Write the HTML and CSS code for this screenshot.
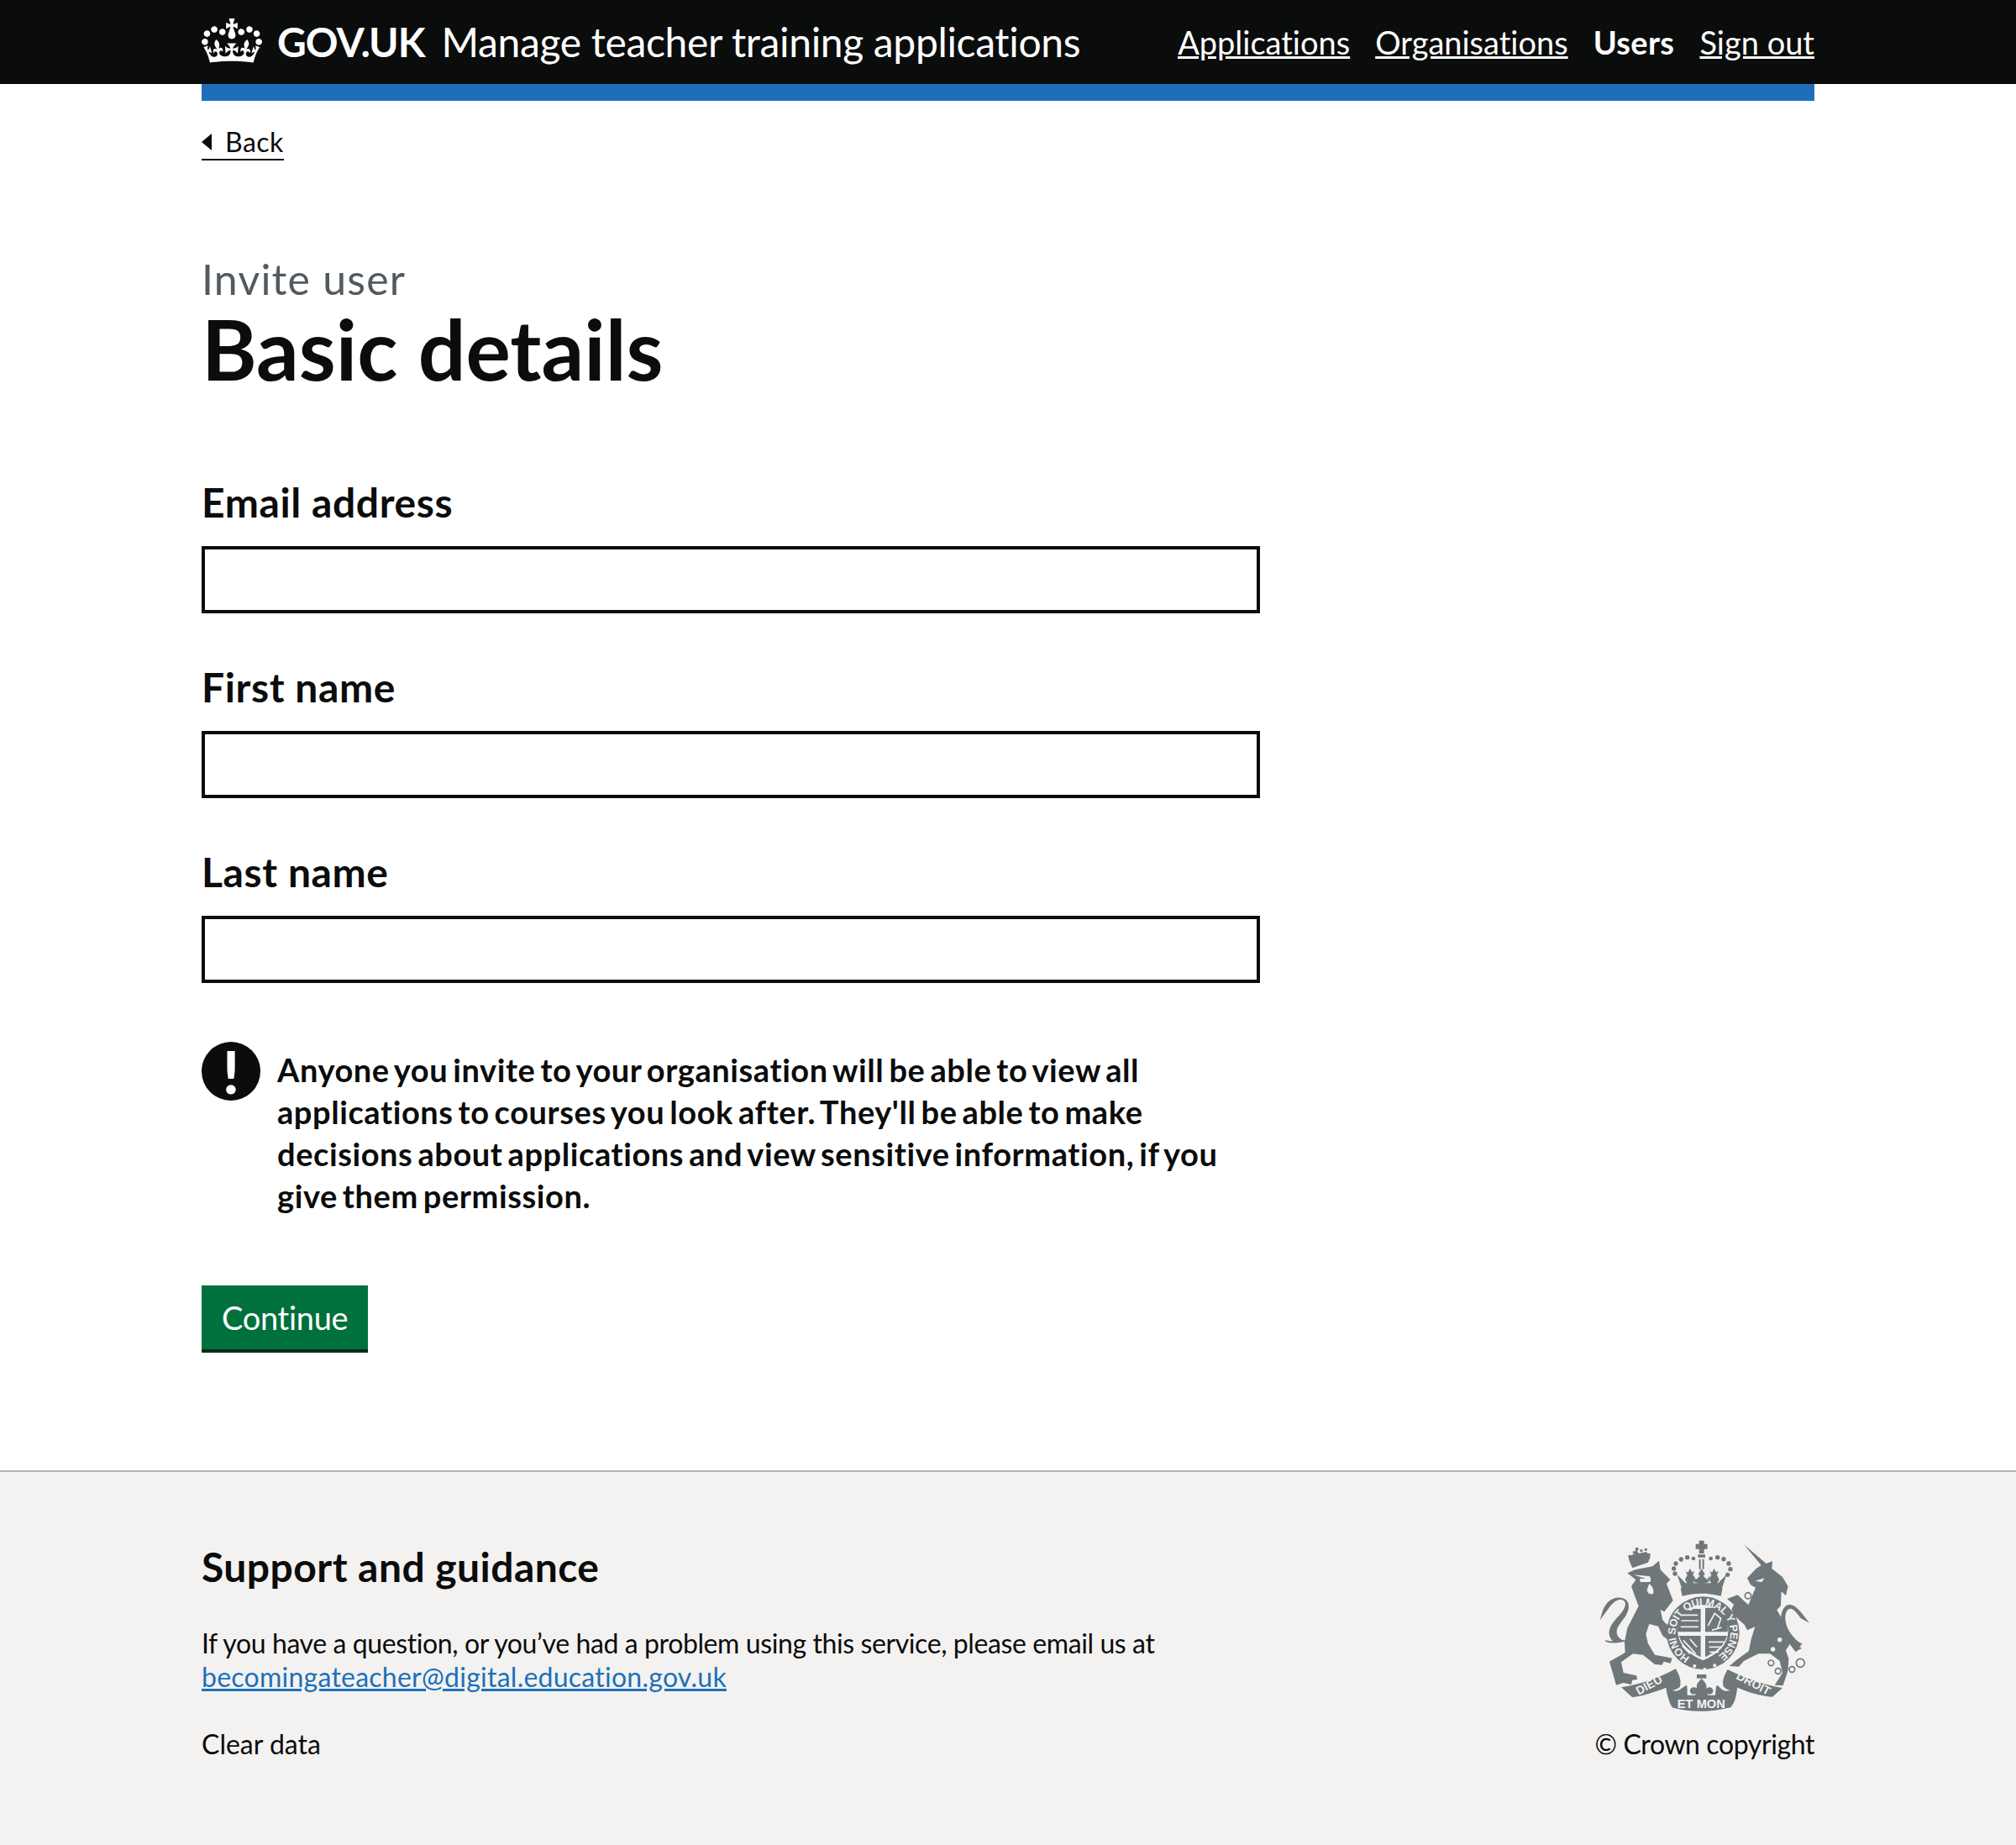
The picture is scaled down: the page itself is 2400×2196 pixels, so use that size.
FILE: index.html
```html
<!DOCTYPE html>
<html lang="en">
<head>
<meta charset="utf-8">
<title>Basic details - Manage teacher training applications</title>
<link rel="stylesheet" href="styles.css">
</head>
<body>
<header class="header">
  <div class="container header-inner">
    <a class="logo" href="#">
      <svg class="crown" viewBox="0 0 132 97" aria-hidden="true"><path fill="currentColor" fill-rule="evenodd" d="M25 30.2c3.5 1.5 7.7-.2 9.1-3.7 1.5-3.6-.2-7.8-3.9-9.2-3.6-1.4-7.6.3-9.1 3.9-1.4 3.5.3 7.5 3.9 9zM9 39.5c3.6 1.5 7.8-.2 9.2-3.7 1.5-3.6-.2-7.8-3.9-9.1-3.6-1.5-7.6.2-9.1 3.8-1.4 3.5.3 7.5 3.8 9zM4.4 57.2c3.5 1.5 7.7-.2 9.1-3.8 1.5-3.6-.2-7.7-3.9-9.1-3.5-1.5-7.6.3-9.1 3.8-1.4 3.5.3 7.6 3.9 9.1zm38.3-21.4c3.5 1.5 7.7-.2 9.1-3.8 1.5-3.6-.2-7.7-3.9-9.1-3.6-1.5-7.6.3-9.1 3.8-1.3 3.6.4 7.7 3.9 9.1zm64.4-5.6c-3.6 1.5-7.8-.2-9.1-3.7-1.5-3.6.2-7.8 3.8-9.2 3.6-1.4 7.7.3 9.2 3.9 1.3 3.5-.4 7.5-3.9 9zm15.9 9.3c-3.6 1.5-7.7-.2-9.1-3.7-1.5-3.6.2-7.8 3.7-9.1 3.6-1.5 7.7.2 9.2 3.8 1.5 3.5-.3 7.5-3.8 9zm4.7 17.7c-3.6 1.5-7.8-.2-9.2-3.8-1.5-3.6.2-7.7 3.9-9.1 3.6-1.5 7.7.3 9.2 3.8 1.3 3.5-.4 7.6-3.9 9.1zM89.3 35.8c-3.6 1.5-7.8-.2-9.2-3.8-1.4-3.6.2-7.7 3.9-9.1 3.6-1.5 7.7.3 9.2 3.8 1.4 3.6-.3 7.7-3.9 9.1zM69.7 17.7l8.9 4.7V9.3l-8.9 2.8c-.2-.3-.5-.6-.9-.9L72.4 0H59.6l3.5 11.2c-.3.3-.6.5-.9.9l-8.8-2.8v13.1l8.8-4.7c.3.3.6.7.9.9l-5 15.4v.1c-.2.8-.4 1.6-.4 2.4 0 4.1 3.1 7.5 7 8.1h.2c.3 0 .7.1 1 .1.4 0 .7 0 1-.1h.2c4-.6 7.1-4.1 7.1-8.1 0-.8-.1-1.7-.4-2.4V34l-5.1-15.4c.4-.2.7-.6 1-.9zM66 92.8c16.9 0 32.8 1.1 47.1 3.2 4-16.9 8.9-26.7 14-33.5l-9.6-3.4c1 4.9 1.1 7.2 0 10.2-1.5-1.4-3-4.3-4.2-8.7L108.6 76c2.8-2 5-3.2 7.5-3.3-4.4 9.4-10 11.9-13.6 11.2-4.3-.8-6.3-4.6-5.6-7.9 1-4.7 5.7-5.9 8-.5 4.3-8.7-3-11.4-7.6-8.8 7.1-7.2 7.9-13.5 2.1-21.1-8 6.1-8.1 12.3-4.5 20.8-4.7-5.4-12.1-2.5-9.5 6.2 3.4-5.2 7.9-2 7.2 3.1-.6 4.3-6.4 7.8-13.5 7.2-10.3-.9-10.9-8-11.2-13.8 2.5-.5 7.1 1.8 11 7.3L80.2 60c-4.1 4.4-8 5.3-12.3 5.4 1.4-4.4 8-11.6 8-11.6H55.5s6.4 7.2 7.9 11.6c-4.2-.1-8-1-12.3-5.4l1.4 16.4c3.9-5.5 8.5-7.7 10.9-7.3-.3 5.8-.9 12.8-11.1 13.8-7.2.6-12.9-2.9-13.5-7.2-.7-5 3.8-8.3 7.1-3.1 2.7-8.7-4.6-11.6-9.4-6.2 3.7-8.5 3.6-14.7-4.6-20.8-5.8 7.6-5 13.9 2.2 21.1-4.7-2.6-11.9.1-7.7 8.8 2.3-5.5 7.1-4.2 8.1.5.7 3.3-1.3 7.1-5.7 7.9-3.5.7-9-1.8-13.5-11.2 2.5.1 4.7 1.3 7.5 3.3l-4.7-15.4c-1.2 4.4-2.7 7.2-4.3 8.7-1.1-3-.9-5.3 0-10.2l-9.5 3.4c5 6.9 9.9 16.7 14 33.5 14.8-2.1 30.8-3.2 47.7-3.2z"/></svg>
      <span class="logotype">GOV.UK</span>
    </a>
    <a class="service" href="#">Manage teacher training applications</a>
    <nav class="nav">
      <a href="#">Applications</a>
      <a href="#">Organisations</a>
      <a class="nav-current" href="#">Users</a>
      <a href="#">Sign out</a>
    </nav>
  </div>
</header>
<div class="container">
  <div class="blue-bar"></div>
  <a class="back" href="#"><span class="back-arrow"></span>Back</a>
  <main class="main">
    <span class="caption">Invite user</span>
    <h1 class="title">Basic details</h1>
    <form class="form">
      <div class="field"><label class="label" for="email">Email address</label><input class="input" id="email" type="text"></div>
      <div class="field"><label class="label" for="first">First name</label><input class="input" id="first" type="text"></div>
      <div class="field"><label class="label" for="last">Last name</label><input class="input" id="last" type="text"></div>
      <div class="warning">
        <span class="warning-icon">!</span>
        <strong class="warning-text">Anyone you invite to your organisation will be able to view all applications to courses you look after. They'll be able to make decisions about applications and view sensitive information, if you give them permission.</strong>
      </div>
      <button class="button" type="button">Continue</button>
    </form>
  </main>
</div>
<footer class="footer">
  <div class="container footer-inner">
    <div class="footer-main">
      <h2 class="footer-title">Support and guidance</h2>
      <p class="footer-text">If you have a question, or you’ve had a problem using this service, please email us at <a class="footer-link" href="#">becomingateacher@digital.education.gov.uk</a></p>
      <a class="footer-clear" href="#">Clear data</a>
    </div>
    <div class="footer-meta">
      <svg class="arms" viewBox="0 0 900 900" aria-hidden="true">
        <defs>
          <path id="ring-path" d="M396 484.5A98 98 0 1 1 488 484.5"/>
          <path id="rib-left" d="M212 620L318 562"/>
          <path id="rib-right" d="M558 560L668 618"/>
        </defs>
        <g fill="#6f777b">
          <!-- lion -->
          <path d="M172 184L200 172L262 160L285 140L290 172L325 208L312 222L335 282L304 322L290 315L298 352L332 388L346 412L326 430L298 408L282 374L250 366L238 402L246 436L270 476L312 484L332 488L326 506L302 500L296 512L270 510L228 476L192 472L150 502L158 540L204 550L208 564L190 566L186 582L158 576L132 584L108 500L164 468L162 430L172 380L212 302L186 232L202 208Z"/>
          <path d="M172 426C118 440 92 432 92 424L120 428C90 394 118 362 144 334C170 304 172 284 150 278C118 280 108 310 74 352L84 318C96 288 118 268 148 272C182 276 186 310 160 346C136 376 120 400 152 422Z"/>
          <path d="M178 138L176 124L196 116L204 98L212 114L240 108L254 126L246 146L190 166Z"/>
          <!-- central crown -->
          <path d="M428 68h18v12h12v18h-12v16h-18v-16h-12v-18h12z"/>
          <path d="M424 118h26v10h-26zM428 134h6v36h-6zM440 134h6v36h-6z"/>
          <path d="M437 168l12 20-6 6 14 14 10-18 -4 26-26 8-26-8-4-26 10 18 14-14-6-6z"/>
          <path d="M396 168l8 14 8-6-6 16 8 14-10 20h-16l-10-20 8-14-6-16 8 6z"/>
          <path d="M482 168l8 14 8-6-6 16 8 14-10 20h-16l-10-20 8-14-6-16 8 6z"/>
          <path d="M350 190l30 30h116l30-30-16 48H366z"/>
          <path d="M362 238C410 226 466 226 512 238L506 266C460 254 412 254 368 266Z"/>
          <!-- garter ring -->
          <circle cx="442" cy="398" r="130"/>
          <!-- unicorn -->
          <path d="M588 82L668 150L690 142L688 168L726 198L746 232L738 264L722 250L720 300L706 316L732 360L760 410L766 440L796 452L772 464L752 438L738 460L748 490L746 530L728 586L698 584L726 540L716 498L682 472L640 472L588 498L570 518L536 516L560 496L606 462L614 420L628 376L600 388L590 368L556 338L544 314L552 296L528 276L566 262L604 298L630 236L612 226L600 202L632 168L650 156Z"/>
          <path d="M736 406C714 366 716 316 740 300C770 286 796 330 822 362L790 344C776 324 760 304 746 314C730 328 734 366 752 396C764 410 780 432 796 436L776 466Z"/>
          <!-- ribbons -->
          <path d="M150 592C220 582 290 556 344 526C356 544 366 566 360 590C340 606 326 606 314 592C270 610 222 624 190 628Z"/>
          <path d="M726 594C660 584 590 558 530 528C518 550 508 572 516 590C534 606 548 606 560 590C602 610 648 622 690 626Z"/>
          <path d="M308 580C328 608 348 612 368 594C386 582 386 574 386 620H486C490 574 490 582 506 596C522 612 544 606 566 582C562 620 556 650 540 664C470 682 396 682 332 664C318 640 312 610 308 580Z"/>
          <path d="M437 560c10 12 22 22 16 36 14-10 30 0 24 14-4 8-12 8-18 4 2 10-8 14-12 10l-10 6-10-6c-4 4-14 0-12-10-6 4-14 4-18-4-6-14 10-24 24-14-6-14 6-24 16-36z"/>
          <rect x="420" y="546" width="34" height="14"/>
        </g>
        <g fill="none" stroke="#6f777b" stroke-width="5">
          <circle cx="685" cy="505" r="10"/>
          <circle cx="710" cy="534" r="10"/>
          <circle cx="760" cy="528" r="10"/>
          <circle cx="790" cy="505" r="15"/>
          <circle cx="726" cy="374" r="10"/>
          <circle cx="603" cy="265" r="11"/>
          <circle cx="592" cy="350" r="11"/>
        </g>
        <g fill="#6f777b">
          <circle cx="345" cy="150" r="8"/><circle cx="338" cy="168" r="8"/><circle cx="342" cy="186" r="8"/><circle cx="364" cy="135" r="8"/><circle cx="386" cy="128" r="8"/><circle cx="408" cy="132" r="7"/>
          <circle cx="470" cy="132" r="7"/><circle cx="494" cy="128" r="8"/><circle cx="516" cy="134" r="8"/><circle cx="534" cy="150" r="8"/><circle cx="540" cy="170" r="8"/><circle cx="530" cy="190" r="8"/>
          <circle cx="180" cy="124" r="5"/><circle cx="196" cy="110" r="5"/><circle cx="206" cy="98" r="6"/><circle cx="222" cy="104" r="5"/><circle cx="238" cy="100" r="5"/><circle cx="250" cy="118" r="5"/>
        </g>
        <!-- garter details -->
        <g fill="#f3f2f1">
          <path d="M442 298c54 0 90 40 90 90 0 54-38 86-90 108-52-22-90-54-90-108 0-50 36-90 90-90z"/>
          <path d="M194 190L254 196L244 206ZM216 204h40l-2 12h-36Z"/>
          <path d="M628 212l34-10-10 14ZM240 196l16 4-6 12-14-4Z"/>
          <circle cx="412" cy="516" r="6"/><circle cx="448" cy="528" r="6"/><circle cx="484" cy="514" r="6"/>
          <circle cx="692" cy="456" r="8"/><circle cx="716" cy="422" r="8"/>
          <path d="M250 222c10 8 18 20 14 36-10 4-20 0-22-14z"/>
        </g>
        <g fill="#6f777b">
          <path d="M362 312h72v82h-82C352 360 354 332 362 312ZM450 308h72C530 330 532 362 530 394h-80ZM356 408h78v76C398 466 368 444 356 408ZM450 408h78C518 444 486 466 450 484Z"/>
        </g>
        <g fill="none" stroke="#f3f2f1" stroke-width="5">
          <path d="M366 334h58M364 354h62M362 376h64"/>
          <path d="M460 372l24-44 22 18-12 36M474 388l34-10"/>
          <path d="M462 430h56M464 448h46M466 466h32"/>
          <path d="M372 424l44 48M396 420l24 28M368 444l28 28"/>
        </g>
        <g class="arms-text">
          <text font-size="38"><textPath href="#ring-path" textLength="510">HONI SOIT QUI MAL Y PENSE</textPath></text>
          <text font-size="42"><textPath href="#rib-left">DIEU</textPath></text>
          <text font-size="42"><textPath href="#rib-right">DROIT</textPath></text>
          <text x="436" y="666" font-size="44" text-anchor="middle">ET MON</text>
        </g>
      </svg>
      <a class="copyright" href="#">© Crown copyright</a>
    </div>
  </div>
</footer>
</body>
</html>
```
FILE: styles.css
```css
* { box-sizing: border-box; }
html, body { margin: 0; padding: 0; }
body {
  background: #fff;
  color: #0b0c0c;
  font-family: Lato, "Noto Sans", Arial, sans-serif;
  font-variant-ligatures: none;
}
a { color: inherit; }
.container { width: 1920px; margin: 0 auto; }

.header { background: #0b0c0c; color: #fff; height: 100px; }
.header-inner { display: flex; align-items: center; height: 100px; }
.logo { display: flex; align-items: center; text-decoration: none; color: #fff; }
.crown { width: 72px; height: 53px; margin-right: 18px; margin-bottom: 4px; }
.logotype { font-size: 48px; font-weight: 700; line-height: 60px; letter-spacing: -1px; }
.service { margin-left: 20px; font-size: 48px; line-height: 60px; letter-spacing: -0.35px; color: #fff; text-decoration: none; }
.nav { margin-left: auto; display: flex; gap: 30px; font-size: 38px; line-height: 50px; }
.nav-current { font-weight: 700; text-decoration: none; letter-spacing: 0.3px; }

.blue-bar { height: 20px; background: #1d70b8; }
.back { display: inline-flex; align-items: center; margin-top: 29px; height: 42px; border-bottom: 2px solid #0b0c0c; font-size: 32px; line-height: 40px; letter-spacing: 0.5px; text-decoration: none; }
.back-arrow { width: 0; height: 0; border-style: solid; border-width: 10px 12px 10px 0; border-color: transparent #0b0c0c transparent transparent; margin-right: 16px; }

.main { padding-top: 111px; padding-bottom: 140px; }
.caption { display: block; font-size: 50px; line-height: 60px; letter-spacing: 1.2px; color: #505a5f; }
.title { margin: 2px 0 104px; font-size: 100px; line-height: 100px; font-weight: 700; }
.form { width: 1260px; }
.field { margin-bottom: 58px; }
.label { display: block; margin-bottom: 22px; font-size: 48px; line-height: 60px; font-weight: 700; letter-spacing: 0.6px; }
.input { display: block; width: 100%; height: 80px; border: 4px solid #0b0c0c; border-radius: 0; background: #fff; }

.warning { display: flex; gap: 20px; margin-bottom: 82px; padding-top: 12px; }
.warning-icon { flex: none; width: 70px; height: 70px; border-radius: 50%; background: #0b0c0c; color: #fff; font-size: 70px; font-weight: 900; line-height: 70px; text-align: center; }
.warning-text { font-size: 38px; line-height: 50px; font-weight: 700; letter-spacing: 0.58px; word-spacing: -3.8px; padding-top: 8px; }

.button { display: block; height: 80px; padding: 0 24px 4px; border: 0; border-radius: 0; background: #00703c; box-shadow: inset 0 -4px 0 #002d18; color: #fff; font: inherit; font-size: 38px; line-height: 50px; letter-spacing: -0.3px; }

.footer { background: #f3f2f1; border-top: 2px solid #b1b4b6; height: 446px; padding-top: 83px; }
.footer-inner { display: flex; justify-content: space-between; }
.footer-title { margin: 0 0 41px; font-size: 48px; line-height: 60px; font-weight: 700; letter-spacing: 0.45px; }
.footer-text { width: 1260px; margin: 0 0 40px; font-size: 32px; line-height: 40px; letter-spacing: -0.4px; }
.footer-link { color: #1d70b8; letter-spacing: 0.25px; }
.footer-clear { font-size: 32px; line-height: 40px; text-decoration: none; }
.footer-meta { display: flex; flex-direction: column; align-items: flex-end; }
.arms { display: block; width: 300px; height: 300px; margin-top: -24px; margin-right: -20px; }
.arms-text { fill: #f3f2f1; font-weight: 700; font-family: "Liberation Sans", Arial, sans-serif; }
.copyright { margin-top: -55px; font-size: 32px; line-height: 40px; letter-spacing: -0.4px; text-decoration: none; }
```
